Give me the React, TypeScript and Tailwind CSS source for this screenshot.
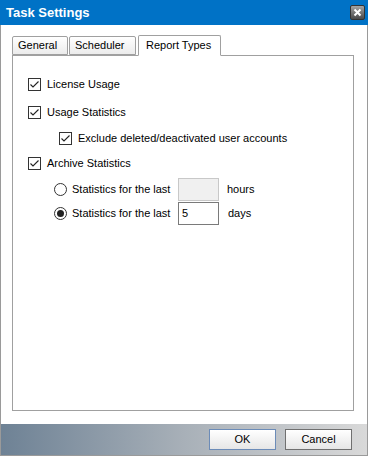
import { useState } from "react";

const font = { fontFamily: '"Liberation Sans", Arial, sans-serif' };

function Check({ checked }: { checked: boolean }) {
  return (
    <span className="w-[13px] h-[13px] border border-[#333] bg-white flex items-center justify-center shrink-0">
      {checked && (
        <svg width="11" height="11" viewBox="0 0 11 11">
          <path d="M1.5 5.5 L4 8 L9.5 2.5" fill="none" stroke="#222" strokeWidth="1.1" />
        </svg>
      )}
    </span>
  );
}

function Radio({ checked }: { checked: boolean }) {
  return (
    <span className="w-[13px] h-[13px] rounded-full border border-[#333] bg-white flex items-center justify-center shrink-0">
      {checked && <span className="w-[7px] h-[7px] rounded-full bg-[#222]" />}
    </span>
  );
}

const TABS = [
  { name: "General", w: "w-[56px]" },
  { name: "Scheduler", w: "w-[67px]" },
  { name: "Report Types", w: "w-[83px]" },
];

export default function App() {
  const [tab] = useState("Report Types");

  return (
    <div className="w-[368px] h-[456px] bg-white border border-[#9a9a9a] flex flex-col text-[11px] text-black" style={font}>
      {/* title bar */}
      <div className="h-[25px] bg-[#0072c6] flex items-center justify-between pl-[6px] pr-[3px] -mx-px -mt-px">
        <span className="text-white font-bold text-[13px]">Task Settings</span>
        <span className="w-[15px] h-[15px] rounded-[2px] bg-gradient-to-b from-[#a5a5a5] to-[#4a4a4a] border border-[#333] flex items-center justify-center">
          <svg width="9" height="9" viewBox="0 0 9 9">
            <path d="M1.5 1.5 L7.5 7.5 M7.5 1.5 L1.5 7.5" stroke="white" strokeWidth="2" />
          </svg>
        </span>
      </div>

      {/* body */}
      <div className="flex-1 flex flex-col pl-[11px] pr-[13px] pt-[10px] pb-[13px]">
        <div className="flex items-end h-[20px]">
          {TABS.map((t) => (
            <div
              key={t.name}
              className={
                t.name === tab
                  ? `${t.w} h-[21px] -mb-px ml-px z-10 bg-white border border-[#a0a0a0] border-b-white rounded-t-[2px] pl-[7px] flex items-center`
                  : `${t.w} h-[19px] bg-gradient-to-b from-white to-[#ececec] border border-[#a0a0a0] rounded-t-[2px] pl-[5px] flex items-center mr-px`
              }
            >
              {t.name}
            </div>
          ))}
        </div>
        <div className="flex-1 border border-[#a0a0a0] pl-[15px] pt-[20px] flex flex-col">
          <label className="flex items-center gap-[6px] h-[16px]">
            <Check checked />
            <span>License Usage</span>
          </label>
          <label className="flex items-center gap-[6px] h-[16px] mt-[12px]">
            <Check checked />
            <span>Usage Statistics</span>
          </label>
          <label className="flex items-center gap-[6px] h-[16px] mt-[10px] ml-[31px]">
            <Check checked />
            <span>Exclude deleted/deactivated user accounts</span>
          </label>
          <label className="flex items-center gap-[6px] h-[16px] mt-[9px]">
            <Check checked />
            <span>Archive Statistics</span>
          </label>
          <div className="flex items-center h-[23px] mt-[7px] ml-[26px]">
            <Radio checked={false} />
            <span className="ml-[5px] w-[106px]">Statistics for the last</span>
            <span className="w-[41px] h-[23px] border border-[#c8c8c8] bg-[#f0f0f0]" />
            <span className="ml-[8px]">hours</span>
          </div>
          <div className="flex items-center h-[23px] mt-[1px] ml-[26px]">
            <Radio checked />
            <span className="ml-[5px] w-[106px]">Statistics for the last</span>
            <span className="w-[41px] h-[23px] border border-[#7a7a7a] bg-white px-[3px] flex items-center">5</span>
            <span className="ml-[9px]">days</span>
          </div>
        </div>
      </div>

      {/* footer */}
      <div className="h-[32px] bg-gradient-to-r from-[#6e8295] via-[#a8b0b8] to-[#d9d9d9] flex items-center justify-end gap-[9px] pr-[15px] -mx-px -mb-px border-b border-[#9a9a9a] border-l border-r">
        <button className="w-[67px] h-[21px] border border-[#6c8cb8] bg-gradient-to-b from-white to-[#e6e6e6]">OK</button>
        <button className="w-[67px] h-[21px] border border-[#707070] bg-gradient-to-b from-white to-[#e6e6e6]">Cancel</button>
      </div>
    </div>
  );
}
